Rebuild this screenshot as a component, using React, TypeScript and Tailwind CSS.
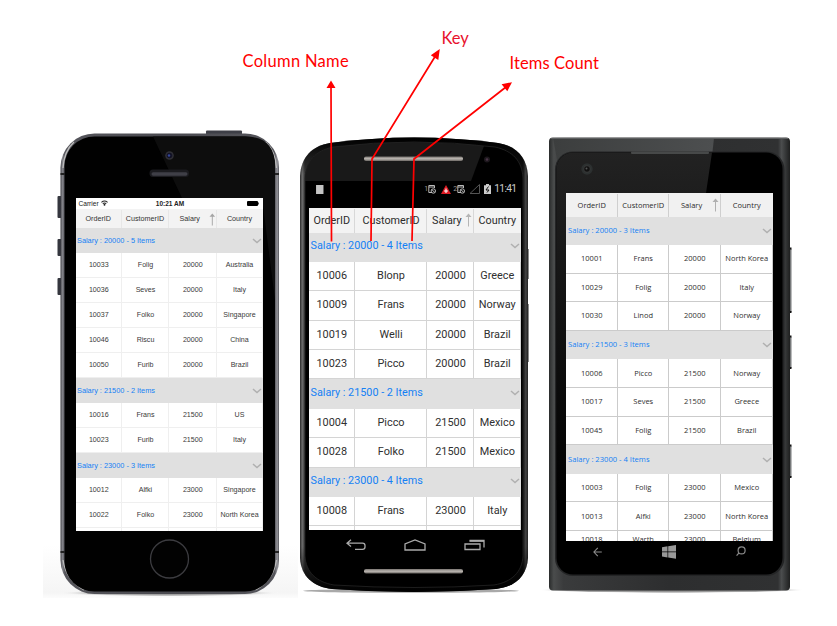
import React from "react";

type Row = string[] | string;

const iosRows: Row[] = [
  "Salary : 20000 - 5 Items",
  ["10033", "Folig", "20000", "Australia"],
  ["10036", "Seves", "20000", "Italy"],
  ["10037", "Folko", "20000", "Singapore"],
  ["10046", "Riscu", "20000", "China"],
  ["10050", "Furib", "20000", "Brazil"],
  "Salary : 21500 - 2 Items",
  ["10016", "Frans", "21500", "US"],
  ["10023", "Furib", "21500", "Italy"],
  "Salary : 23000 - 3 Items",
  ["10012", "Alfki", "23000", "Singapore"],
  ["10022", "Folko", "23000", "North Korea"],
  ["", "", "", ""],
];

const androidRows: Row[] = [
  "Salary : 20000 - 4 Items",
  ["10006", "Blonp", "20000", "Greece"],
  ["10009", "Frans", "20000", "Norway"],
  ["10019", "Welli", "20000", "Brazil"],
  ["10023", "Picco", "20000", "Brazil"],
  "Salary : 21500 - 2 Items",
  ["10004", "Picco", "21500", "Mexico"],
  ["10028", "Folko", "21500", "Mexico"],
  "Salary : 23000 - 4 Items",
  ["10008", "Frans", "23000", "Italy"],
  ["", "", "", ""],
];

const windowsRows: Row[] = [
  "Salary : 20000 - 3 Items",
  ["10001", "Frans", "20000", "North Korea"],
  ["10029", "Folig", "20000", "Italy"],
  ["10030", "Linod", "20000", "Norway"],
  "Salary : 21500 - 3 Items",
  ["10006", "Picco", "21500", "Norway"],
  ["10017", "Seves", "21500", "Greece"],
  ["10045", "Folig", "21500", "Brazil"],
  "Salary : 23000 - 4 Items",
  ["10003", "Folig", "23000", "Mexico"],
  ["10013", "Alfki", "23000", "North Korea"],
  ["10018", "Warth", "23000", "Belgium"],
];

const headers = ["OrderID", "CustomerID", "Salary", "Country"];

type GridTheme = {
  cols: string;
  header: string;
  headerCell: string;
  row: string;
  cell: string;
  group: string;
  arrow: string;
  salary: string;
  last: string;
};

const iosTheme: GridTheme = {
  cols: "grid grid-cols-[46.5px_47px_47.5px_46px]",
  header: "h-[19px] bg-[#f3f3f3] pt-px text-[7.2px] text-[#333]",
  headerCell: "border-r border-[#e7e7e7]",
  row: "h-[25px] text-[7.1px] text-[#3a3a3a]",
  cell: "border-r border-b border-[#efefef] pt-px pl-px",
  group: "h-[25px] pl-[1.5px] pr-[1px] pt-px text-[7.35px]",
  arrow: "ml-[9px] h-[13px] w-[7px] text-[#a5a5a5]",
  salary: "pl-[10.5px]",
  last: "h-[25px] text-[7px] text-[#333]",
};

const androidTheme: GridTheme = {
  cols: "grid grid-cols-[46.5px_72px_47px_46.5px]",
  header: "h-[24.5px] bg-[#f3f3f3] pt-px text-[10.8px] text-[#2c2c2c]",
  headerCell: "border-r border-[#d8d8d8] pl-px",
  row: "h-[29.4px] text-[10.9px] text-[#303030]",
  cell: "border-r border-b border-[#d4d4d4] pl-px",
  group: "h-[29.4px] pl-[2px] pr-px pb-[2px] text-[10.8px]",
  arrow: "ml-[3px] mb-[2px] h-[14px] w-[7px] text-[#b5b5b5]",
  salary: "pl-[4px]",
  last: "h-[29.4px] text-[10.8px] text-[#222]",
};

const windowsTheme: GridTheme = {
  cols: "grid grid-cols-[51.5px_51.5px_51.5px_52.5px]",
  header: "h-[23.5px] bg-[#f1f1f1] pt-px text-[7.5px] text-[#2c2c2c]",
  headerCell: "border-r border-[#cfcfcf] pl-px",
  row: "h-[28.6px] text-[7.5px] text-[#303030]",
  cell: "border-r border-b border-[#cbcbcb] pl-px",
  group: "h-[28.6px] pl-[2px] pr-[1px] text-[7.6px]",
  arrow: "ml-[10px] h-[14px] w-[7px] text-[#b0b0b0]",
  salary: "pl-[11px]",
  last: "h-[18px] text-[7.5px] text-[#303030]",
};

function SortArrow({ className }: { className: string }) {
  return (
    <svg viewBox="0 0 7 14" className={className} fill="none" stroke="currentColor">
      <path d="M3.5 13.5V3" />
      <path d="M0.5 4 3.5 0.5 6.5 4Z" fill="currentColor" stroke="none" />
    </svg>
  );
}

function Chevron() {
  return (
    <svg viewBox="0 0 10 6" className="h-[6px] w-[10px]" fill="none" stroke="#b0b0b0" strokeWidth="1.5">
      <path d="M1 1 5 4.6 9 1" />
    </svg>
  );
}

function DataGrid({ rows, theme }: { rows: Row[]; theme: GridTheme }) {
  return (
    <div className="min-h-0 flex-1 overflow-hidden bg-white whitespace-nowrap">
      <div className={theme.cols + " " + theme.header}>
        {headers.map((h, i) => (
          <div
            key={h}
            className={
              "flex items-center " +
              (i < 3 ? theme.headerCell : "") +
              " " +
              (i === 2 ? "" : "justify-center")
            }
          >
            <span className={i === 2 ? theme.salary : ""}>{h}</span>
            {i === 2 && <SortArrow className={theme.arrow} />}
          </div>
        ))}
      </div>
      {rows.map((r, i) =>
        typeof r === "string" ? (
          <div key={i} className={"flex items-center justify-between bg-[#e0e0e0] text-[#1480f5] " + theme.group}>
            <span>{r}</span>
            <Chevron />
          </div>
        ) : (
          <div key={i} className={theme.cols + " " + (i === rows.length - 1 ? theme.last : theme.row)}>
            {r.map((c, j) => (
              <div key={j} className={"flex items-center justify-center " + theme.cell}>
                {c}
              </div>
            ))}
          </div>
        )
      )}
    </div>
  );
}

function IPhoneBody() {
  return (
    <svg className="absolute inset-0 h-full w-full" viewBox="40 0 258 626">
      <defs>
        <linearGradient id="iedge" x1="0" x2="1" y1="0" y2="0">
          <stop offset="0" stopColor="#3d3d43" />
          <stop offset="0.008" stopColor="#85858b" />
          <stop offset="0.02" stopColor="#55555b" />
          <stop offset="0.5" stopColor="#4a4a50" />
          <stop offset="0.98" stopColor="#55555b" />
          <stop offset="0.992" stopColor="#96969c" />
          <stop offset="1" stopColor="#55555b" />
        </linearGradient>
        <linearGradient id="ishadow" x1="0" x2="0" y1="0" y2="1">
          <stop offset="0" stopColor="#fff" />
          <stop offset="0.9" stopColor="#f5f5f5" />
          <stop offset="1" stopColor="#fcfcfc" />
        </linearGradient>
        <radialGradient id="ifloor">
          <stop offset="0" stopColor="#777" />
          <stop offset="0.7" stopColor="#bbb" />
          <stop offset="1" stopColor="#fff" stopOpacity="0" />
        </radialGradient>
      </defs>
      <rect x="43" y="545" width="255" height="53" fill="url(#ishadow)" />
      <ellipse cx="169" cy="593" rx="112" ry="3.500" fill="url(#ifloor)" />
      <rect x="206" y="130.5" width="36" height="5" rx="1" fill="#3e3f47" />
      <rect x="57.5" y="196" width="4" height="22" rx="1" fill="#34363e" />
      <rect x="57.5" y="239" width="4" height="17" rx="1" fill="#34363e" />
      <rect x="57.5" y="278" width="4" height="17" rx="1" fill="#34363e" />
      <rect x="60.5" y="133.5" width="218.5" height="460.5" rx="34" fill="url(#iedge)" />
      <path d="M60.5 174h4M275 174h4M60.5 552h4M275 552h4" stroke="#222" strokeWidth="2" />
      <path d="M74 142Q64 151 63 168M265.500 142Q275.500 151 276.500 168M63 560Q66 580 84 590M276.500 560Q273.500 580 255.500 590" fill="none" stroke="#bbb" strokeWidth="1.3" />
      <rect x="64.500" y="136.500" width="210.500" height="455" rx="30" fill="#010101" />
      <path d="M153 136.500H245Q275 136.500 275 166V300L262 198H182Z" fill="#0d0d0d" />
      <circle cx="169.500" cy="155.500" r="4.300" fill="#303036" />
      <circle cx="169.500" cy="155.500" r="2.800" fill="#131326" />
      <circle cx="169" cy="155.500" r="1.200" fill="#35479b" />
      <rect x="149.500" y="169.500" width="39.500" height="7.500" rx="3.500" fill="#1b1b1f" />
      <rect x="151.500" y="172.300" width="36" height="3.400" rx="1.700" fill="#3f3f47" />
      <circle cx="169.500" cy="559" r="19" fill="#020202" stroke="#3c3c40" strokeWidth="1.300" />
    </svg>
  );
}

function AndroidBody() {
  const shell =
    "M300 176C301 157 312 146 330 143Q414 132 498 143C516 146 527 157 528 176V558C527 576 515 587 496 589Q414 595 332 589C313 587 301 576 300 558Z";
  const inner =
    "M305 178C306 161 315 151 333 147Q414 137 495 147C513 151 522 161 523 178V556C522 572 512 582 494 585Q414 590 334 585C316 582 306 572 305 556Z";
  return (
    <svg className="absolute inset-0 h-full w-full" viewBox="298 0 240 626">
      <defs>
        <linearGradient id="aedge" x1="0" x2="1" y1="0" y2="0">
          <stop offset="0" stopColor="#2b2b2b" />
          <stop offset="0.01" stopColor="#6c6c6c" />
          <stop offset="0.022" stopColor="#333" />
          <stop offset="0.5" stopColor="#111" />
          <stop offset="0.978" stopColor="#111" />
          <stop offset="0.99" stopColor="#444" />
          <stop offset="1" stopColor="#222" />
        </linearGradient>
        <linearGradient id="afade" x1="0" x2="0" y1="0" y2="1">
          <stop offset="0" stopColor="#000" />
          <stop offset="0.08" stopColor="#000" stopOpacity="0" />
          <stop offset="0.9" stopColor="#000" stopOpacity="0" />
          <stop offset="1" stopColor="#000" />
        </linearGradient>
        <linearGradient id="abar" x1="0" x2="0" y1="0" y2="1">
          <stop offset="0" stopColor="#77736f" />
          <stop offset="0.5" stopColor="#bdb8b3" />
          <stop offset="1" stopColor="#6a6662" />
        </linearGradient>
      </defs>
      <ellipse cx="411" cy="590.800" rx="108" ry="2" fill="#a9a9a9" />
      <path d="M528 249v30M528 304v58" stroke="#8a8a8a" strokeWidth="2" />
      <path d={shell} fill="url(#aedge)" />
      <path d={shell} fill="url(#afade)" />
      <path d={inner} fill="#000" />
      <path d="M305 181V178C306 161 315 151 333 147Q405 138 484 146L471 181Z" fill="#191919" />
      <path d={inner} fill="none" stroke="#242424" strokeWidth="0.800" />
      <rect x="364" y="156.500" width="99" height="4.500" rx="2" fill="url(#abar)" />
      <circle cx="487" cy="159.500" r="3" fill="#1d181d" />
      <circle cx="487" cy="159.500" r="1.300" fill="#493447" />
      <rect x="364" y="569" width="99" height="4.500" rx="2" fill="url(#abar)" />
    </svg>
  );
}

function WindowsBody() {
  return (
    <svg className="absolute inset-0 h-full w-full" viewBox="538 0 299 626">
      <defs>
        <linearGradient id="wedge" x1="0" x2="1" y1="0" y2="0">
          <stop offset="0" stopColor="#292b2b" />
          <stop offset="0.02" stopColor="#4a4c4c" />
          <stop offset="0.06" stopColor="#3a3b3c" />
          <stop offset="0.5" stopColor="#2d2e2f" />
          <stop offset="0.95" stopColor="#303132" />
          <stop offset="0.965" stopColor="#4b4d4e" />
          <stop offset="1" stopColor="#1e1f1f" />
        </linearGradient>
        <linearGradient id="wglare" x1="0" x2="1" y1="0" y2="0">
          <stop offset="0" stopColor="#3c3e3e" />
          <stop offset="1" stopColor="#4d4f50" />
        </linearGradient>
        <linearGradient id="wglass" x1="0" x2="0" y1="0" y2="1">
          <stop offset="0" stopColor="#222" />
          <stop offset="1" stopColor="#000" />
        </linearGradient>
        <radialGradient id="wfloor">
          <stop offset="0" stopColor="#777" />
          <stop offset="0.8" stopColor="#aaa" />
          <stop offset="1" stopColor="#fff" stopOpacity="0" />
        </radialGradient>
      </defs>
      <ellipse cx="672" cy="590" rx="134" ry="3" fill="url(#wfloor)" />
      <path d="M790.500 249v63M790.500 337v31M790.500 446v31" stroke="#77797a" strokeWidth="2" />
      <path d="M790 248.500h1.500M790 312h1.500M790 336.500h1.500M790 368h1.500M790 445.500h1.500M790 477h1.500" stroke="#111" strokeWidth="2" />
      <rect x="549" y="137.500" width="241" height="453" rx="4" fill="url(#wedge)" />
      <path d="M553 138H714L711 165H558Z" fill="url(#wglare)" />
      <path d="M551 138.500H788" stroke="#5d5f60" strokeWidth="1" />
      <rect x="555" y="151.500" width="229.500" height="424.500" rx="18" fill="#242526" />
      <rect x="556.500" y="152.500" width="226" height="422" rx="16.500" fill="#000" />
      <path d="M556.500 500V169A16.500 16.500 0 0 1 573 152.500H712L706 193H566V500Z" fill="url(#wglass)" />
      <rect x="631" y="151.500" width="78" height="2.500" rx="1" fill="#474949" />
      <circle cx="587" cy="169" r="5.700" fill="#2c3030" />
      <circle cx="587" cy="169" r="3.300" fill="#111" stroke="#444" strokeWidth="0.700" />
      <circle cx="586.500" cy="168.500" r="1" fill="#555" />
    </svg>
  );
}

function IPhone() {
  return (
    <section className="relative flex w-[258px] flex-col pt-[198px] pl-[35.5px] font-['Liberation_Sans',Arial,sans-serif]">
      <IPhoneBody />
      <div className="relative flex h-[333px] w-[187px] flex-col overflow-hidden bg-white">
        <div className="grid h-[11px] shrink-0 grid-cols-3 items-center px-[3px] text-[#222]">
          <span className="flex items-center gap-[2px] text-[6.6px]">
            Carrier
            <svg viewBox="0 0 8 6" className="h-[6px] w-[7px]" fill="none" stroke="#222" strokeWidth="1.200">
              <path d="M0.500 2.200Q4-0.800 7.500 2.200M2 3.800Q4 2.200 6 3.800" />
              <circle cx="4" cy="5" r="0.500" fill="#222" />
            </svg>
          </span>
          <span className="pl-[2px] text-center text-[6.5px] font-bold whitespace-nowrap">10:21 AM</span>
          <svg viewBox="0 0 12 5" className="h-[5px] w-[12px] justify-self-end" fill="#000">
            <rect width="11" height="5" rx="1" />
            <rect x="11.300" y="1.500" width="0.700" height="2" />
          </svg>
        </div>
        <DataGrid rows={iosRows} theme={iosTheme} />
      </div>
    </section>
  );
}

function AndroidStatus() {
  return (
    <div className="flex h-[27px] shrink-0 items-start justify-between bg-black pt-[1px] pr-[4px] pl-[7px] text-[10.5px] leading-[14px] text-[#ccc]">
      <svg viewBox="0 0 8 9" className="mt-[3px] h-[9px] w-[8px]">
        <rect width="7.500" height="9" fill="#bbb" />
        <path d="M2 0v9M4 0v9M6 0v9" stroke="#ddd" strokeWidth="0.600" />
      </svg>
      <div className="flex items-center">
        <span className="text-[7px] text-[#999]">1</span>
        <SimIcon />
        <svg viewBox="0 0 10 9" className="ml-[5px] h-[9px] w-[10px]">
          <path d="M5 0 10 9H0Z" fill="#e01b24" />
          <path d="M5 3.500v4.500M3 6h4" stroke="#fff" strokeWidth="1.100" />
        </svg>
        <span className="ml-[2px] text-[7px] text-[#999]">2</span>
        <SimIcon />
        <svg viewBox="0 0 11 10" className="ml-[4px] h-[10px] w-[11px]" fill="none" stroke="#555">
          <path d="M1 9.500H10.500V0.500Z" />
        </svg>
        <svg viewBox="0 0 7 10" className="ml-[4px] h-[10px] w-[7px]">
          <path d="M0 1.200H2V0H5V1.200H7V10H0Z" fill="#ccc" />
          <path d="M4.500 2.500 2 6h3L3 8.500" stroke="#111" fill="none" />
        </svg>
        <span className="pl-[3px] text-[10.2px] tracking-[-0.6px]">11:41</span>
      </div>
    </div>
  );
}

function SimIcon() {
  return (
    <svg viewBox="0 0 8 10" className="h-[10px] w-[8px]" fill="none" stroke="#bbb" strokeWidth="1">
      <path d="M4 8.500H0.800V1.500H6.500V4M1 3h5" />
      <circle cx="5.300" cy="7" r="2.200" />
      <path d="M3.800 5.500 6.800 8.500" />
    </svg>
  );
}

function Android() {
  return (
    <section className="relative flex w-[240px] flex-col pt-[181px] pl-[10.5px] font-[Roboto,sans-serif]">
      <AndroidBody />
      <div className="relative flex h-[349px] w-[212px] flex-col overflow-hidden bg-white">
        <AndroidStatus />
        <DataGrid rows={androidRows} theme={androidTheme} />
      </div>
      <div className="relative flex h-[30px] w-[212px] items-center justify-between pr-[36px] pl-[37px]">
        <svg viewBox="0 0 20 12" className="h-[12px] w-[20px]" fill="none" stroke="#aaa" strokeWidth="1.300">
          <path d="M5 0.800 1 4.200 5 7.600M1.300 4.200H16.500Q19 4.200 19 6.500V8Q19 10.300 16.500 10.300H9" />
        </svg>
        <svg viewBox="0 0 22 12" className="h-[12px] w-[22px]" fill="none" stroke="#aaa" strokeWidth="1.300">
          <path d="M1 11V5L11 1 21 5V11Z" />
        </svg>
        <svg viewBox="0 0 21 12" className="h-[12px] w-[21px]" fill="none" stroke="#aaa" strokeWidth="1.300">
          <path d="M1 5H16V10.500H1ZM5.500 1.500H20V8.500" />
          <path d="M5.500 2.200H20" />
        </svg>
      </div>
    </section>
  );
}

function WindowsPhone() {
  return (
    <section className="relative flex w-[299px] flex-col pt-[193px] pl-[28px] font-['Open_Sans','Noto_Sans',sans-serif]">
      <WindowsBody />
      <div className="relative flex h-[347.5px] w-[207px] flex-col overflow-hidden bg-white">
        <DataGrid rows={windowsRows} theme={windowsTheme} />
      </div>
      <div className="relative flex h-[22px] w-[207px] items-center justify-between pr-[27px] pl-[27px]">
        <svg viewBox="0 0 9 10" className="h-[10px] w-[9px]" fill="none" stroke="#8b8b8b" strokeWidth="1.100">
          <path d="M4.800 0.800 0.900 5 4.800 9.200M1 5H8.800" />
        </svg>
        <svg viewBox="0 0 14 14" className="h-[14px] w-[14px]" fill="#999">
          <path d="M0 2.200 5.500 1.300V6.500H0ZM6.200 1.200 14 0V6.500H6.200ZM0 7.200H5.500V12.500L0 11.600ZM6.200 7.200H14V13.700L6.200 12.500Z" />
        </svg>
        <svg viewBox="0 0 10 11" className="h-[11px] w-[10px]" fill="none" stroke="#8b8b8b" strokeWidth="1.200">
          <circle cx="5.600" cy="4.400" r="3.500" />
          <path d="M3 6.800 0.600 9.700" />
        </svg>
      </div>
    </section>
  );
}

function Callouts() {
  return (
    <div className="pointer-events-none absolute inset-0 font-[Lato,sans-serif] text-[16.5px] leading-[20px] whitespace-nowrap text-[#ff0000]">
      <svg className="absolute inset-0" width="837" height="626" fill="none" stroke="#ff0000" strokeWidth="1.700">
        <path d="M331.500 241.500 331 86M371 241 372 159 436 55M412 241 414 159 506 87" />
        <path d="M331 80.500 335.500 88H326.500ZM439.800 49 438.300 60 430.800 55.200ZM512 82.200 507.300 91.200 501.600 84.200Z" fill="#ff0000" stroke="none" />
      </svg>
      <span className="absolute top-[51px] left-[242.5px] tracking-[0.3px]">Column Name</span>
      <span className="absolute top-[28px] left-[441.500px] text-[#e8112d]">Key</span>
      <span className="absolute top-[53px] left-[509.500px] tracking-[0.1px]">Items Count</span>
    </div>
  );
}

export default function App() {
  return (
    <main className="relative flex h-[626px] w-[837px] overflow-hidden bg-white pl-[40px]">
      <IPhone />
      <Android />
      <WindowsPhone />
      <Callouts />
    </main>
  );
}
